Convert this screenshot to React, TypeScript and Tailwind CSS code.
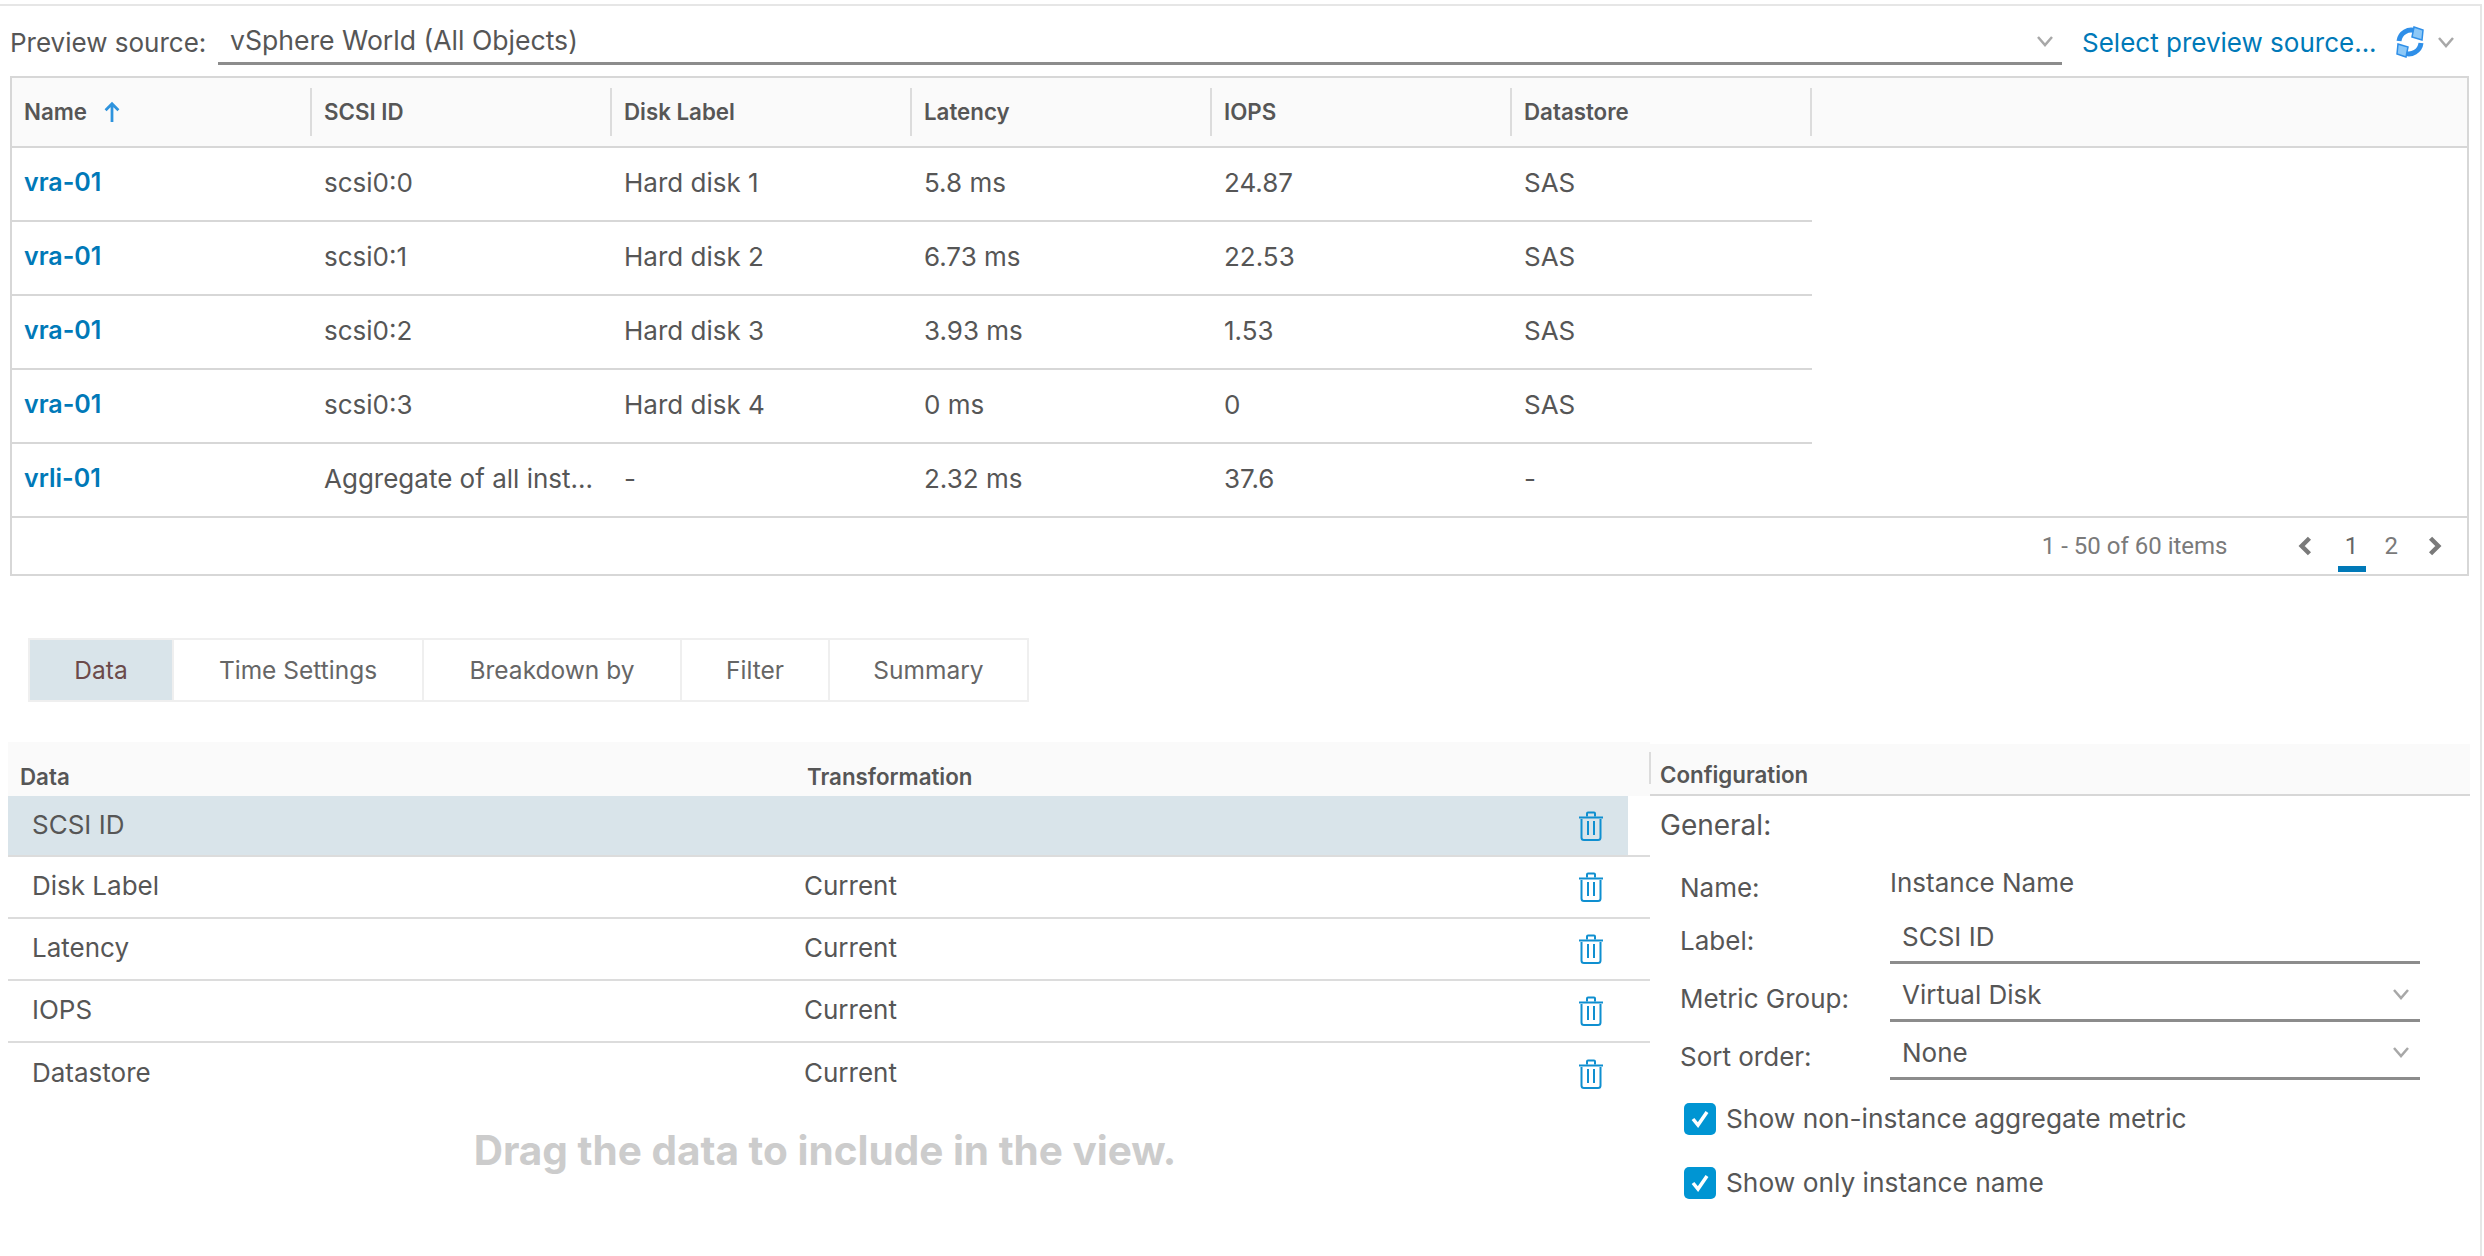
const FONT = "font-['Inter',sans-serif]";

const rows = [
  ["vra-01", "scsi0:0", "Hard disk 1", "5.8 ms", "24.87", "SAS"],
  ["vra-01", "scsi0:1", "Hard disk 2", "6.73 ms", "22.53", "SAS"],
  ["vra-01", "scsi0:2", "Hard disk 3", "3.93 ms", "1.53", "SAS"],
  ["vra-01", "scsi0:3", "Hard disk 4", "0 ms", "0", "SAS"],
  ["vrli-01", "Aggregate of all inst...", "-", "2.32 ms", "37.6", "-"],
];
const heads = ["SCSI ID", "Disk Label", "Latency", "IOPS", "Datastore"];
const dataRows = [
  ["SCSI ID", ""],
  ["Disk Label", "Current"],
  ["Latency", "Current"],
  ["IOPS", "Current"],
  ["Datastore", "Current"],
];

function Chevron({ className = "" }: { className?: string }) {
  return (
    <svg viewBox="0 0 18 12" className={"w-[18px] h-[12px] " + className} fill="none" stroke="#a8a8a8" strokeWidth="2.500">
      <path d="M2 2l7 8 7-8" />
    </svg>
  );
}

function Trash() {
  return (
    <svg viewBox="0 0 26 30" className="w-[26px] h-[30px]" fill="none" stroke="#0f8fd0" strokeWidth="2">
      <path d="M1 6.5h24" />
      <path d="M9 5.500V2.500q0-1 1-1h6q1 0 1 1v3" />
      <path d="M3.500 8v18.500q0 2.500 2.500 2.500h14q2.500 0 2.500-2.500V8" />
      <path d="M10 10v14M16 10v14" />
    </svg>
  );
}

function Refresh() {
  return (
    <svg viewBox="0 0 30 32" className="w-[30px] h-[32px]">
      <path d="M4 15C5 7 13 2 21 5" fill="none" stroke="#2f8fe8" strokeWidth="5" />
      <path d="M26 17C25 25 17 30 9 27" fill="none" stroke="#2f8fe8" strokeWidth="5" />
      <path d="M19 1l9 3-1 10-10-3z" fill="#8cc8f7" stroke="#2f8fe8" strokeWidth="1.500" />
      <path d="M11 31l-9-3 1-10 10 3z" fill="#8cc8f7" stroke="#2f8fe8" strokeWidth="1.500" />
    </svg>
  );
}

function Checkbox({ label }: { label: string }) {
  return (
    <div className="flex items-center h-[32px]">
      <div className="w-[32px] h-[32px] rounded-[5px] bg-[#0095d3] flex items-center justify-center">
        <svg viewBox="0 0 20 18" className="w-[20px] h-[18px]" fill="none" stroke="#fff" strokeWidth="3.500">
          <path d="M3 9l5 6 9-13" />
        </svg>
      </div>
      <span className="ml-[10px] text-[26.3px] text-[#565656]">{label}</span>
    </div>
  );
}

function FormRow({ label, value, chevron }: { label: string; value: string; chevron?: boolean }) {
  return (
    <div className="flex items-start ml-[30px] h-[58px]">
      <div className="w-[210px] text-[26px] text-[#565656] leading-[30px] pt-[6px]">{label}</div>
      <div className="w-[530px] h-[44px] border-b-[3px] border-[#8c8c8c] flex items-start justify-between pl-[12px] pr-[10px]">
        <span className="text-[26px] text-[#565656] leading-[30px] mt-[2px]">{value}</span>
        {chevron && <Chevron className="mt-[10px]" />}
      </div>
    </div>
  );
}

export default function App() {
  return (
    <div className={"w-[2484px] h-[1256px] bg-white overflow-hidden pt-[4px] " + FONT}>
      <div className="w-[2482px] h-[1252px] border-t-2 border-r-2 border-[#e6e6e6]">
        {/* toolbar */}
        <div className="h-[70px] flex items-start pl-[10px]">
          <span className="w-[208px] text-[26px] leading-[32px] pt-[21px] box-content text-[#565656] whitespace-nowrap">Preview source:</span>
          <div className="w-[1844px] h-[59px] border-b-[3px] border-[#8c8c8c] flex items-center justify-between pl-[12px] pr-[8px] pt-[14px]">
            <span className="text-[26.6px] text-[#565656]">vSphere World (All Objects)</span>
            <Chevron />
          </div>
          <span className="ml-[20px] mt-[21px] text-[26px] leading-[32px] text-[#0079b8] whitespace-nowrap">Select preview source...</span>
          <div className="ml-[18px] mt-[20px] shrink-0"><Refresh /></div>
          <Chevron className="ml-[12px] mt-[30px] shrink-0" />
        </div>

        {/* table */}
        <div className="ml-[10px] w-[2459px] border-2 border-[#d7d7d7]">
          <div className="h-[70px] bg-[#fafafa] border-b-2 border-[#d7d7d7] flex items-center">
            <div className="w-[300px] h-[48px] flex items-center pl-[12px] border-r-2 border-[#dcdcdc] text-[22.3px] font-semibold text-[#565656]">
              Name
              <svg viewBox="0 0 20 24" className="w-[20px] h-[22px] ml-[15px]" fill="none" stroke="#2e93dd" strokeWidth="3">
                <path d="M10 23V3M3 10l7-7 7 7" />
              </svg>
            </div>
            {heads.map((h) => (
              <div key={h} className="w-[300px] h-[48px] flex items-center pl-[12px] border-r-2 border-[#dcdcdc] text-[22.3px] font-semibold text-[#565656]">{h}</div>
            ))}
          </div>
          {rows.map((r, i) => (
            <div key={i} className="w-[1800px] h-[74px] border-b-2 border-[#d7d7d7] flex items-center pb-[3px] text-[26px] text-[#565656]">
              <div className="w-[300px] pl-[12px] text-[25px] font-semibold text-[#0079b8]">{r[0]}</div>
              {r.slice(1).map((c, j) => (
                <div key={j} className="w-[300px] pl-[12px] pr-[10px] truncate">{c}</div>
              ))}
            </div>
          ))}
          <div className="h-[56px] border-t-2 -mt-[2px] border-[#d7d7d7] box-content flex items-center justify-end font-['Roboto',sans-serif] text-[24px] text-[#7a7a7a]">
            <span>1 - 50 of 60 items</span>
            <svg viewBox="0 0 12 18" className="w-[14px] h-[20px] ml-[70px]" fill="none" stroke="#7a7a7a" strokeWidth="4"><path d="M10 2L3 9l7 7" /></svg>
            <div className="ml-[26px] w-[28px] h-[44px] mt-[8px] flex justify-center border-b-[6px] border-[#0079b8] text-[#666]">1</div>
            <span className="ml-[19px]">2</span>
            <svg viewBox="0 0 12 18" className="w-[14px] h-[20px] ml-[30px] mr-[25px]" fill="none" stroke="#7a7a7a" strokeWidth="4"><path d="M2 2l7 7-7 7" /></svg>
          </div>
        </div>

        {/* tabs */}
        <div className="mt-[62px] ml-[28px] flex h-[64px] text-[24.5px] text-[#666]">
          <div className="w-[146px] bg-[#d9e4ea] border-2 border-[#efefef] flex items-center justify-center text-[#6b4a4a]">Data</div>
          <div className="w-[250px] border-2 border-l-0 border-[#efefef] flex items-center justify-center">Time Settings</div>
          <div className="w-[258px] border-2 border-l-0 border-[#efefef] flex items-center justify-center">Breakdown by</div>
          <div className="w-[148px] border-2 border-l-0 border-[#efefef] flex items-center justify-center">Filter</div>
          <div className="w-[199px] border-2 border-l-0 border-[#efefef] flex items-center justify-center">Summary</div>
        </div>

        {/* bottom */}
        <div className="mt-[40px] flex items-start">
          <div className="w-[1642px] ml-[8px]">
            <div className="h-[54px] bg-[#fafafa] flex items-end pb-[3px] text-[22.3px] font-semibold text-[#565656]">
              <span className="w-[799px] pl-[12px]">Data</span>
              <span>Transformation</span>
            </div>
            {dataRows.map((r, i) => (
              <div key={r[0]} className={"flex text-[26px] text-[#565656] " + (i === 0 ? "h-[61px] " : "h-[62px] ") + (i < 4 ? "border-b-2 border-[#dcdcdc]" : "")}>
                <div className={"w-[1620px] flex items-center pb-[3px] " + (i === 0 ? "bg-[#d9e4ea]" : "")}>
                  <span className="w-[796px] pl-[24px]">{r[0]}</span>
                  <span className="flex-1">{r[1]}</span>
                  <span className="mr-[24px] pt-[3px]"><Trash /></span>
                </div>
              </div>
            ))}
            <div className="mt-[23px] text-center pr-[8px] text-[40.5px] font-bold text-[#cccccc] leading-[46px]">Drag the data to include in the view.</div>
          </div>
          <div className="w-[820px] mt-[2px]">
            <div className="h-[52px] bg-[#fafafa] border-b-2 border-[#d7d7d7] flex items-center relative pl-[10px] pt-[12px] text-[22.3px] font-semibold text-[#565656]">
              <span className="absolute left-[-1px] top-[8px] w-[2px] h-[32px] bg-[#dcdcdc]" />
              Configuration
            </div>
            <div className="pl-[10px] text-[28px] text-[#565656] leading-[32px] pt-[13px]">General:</div>
            <div className="ml-[30px] mt-[21px] h-[58px] flex items-start text-[26px] leading-[30px] text-[#565656] pl-0">
              <div className="w-[210px] pt-[11px]">Name:</div>
              <div className="pt-[6px]">Instance Name</div>
            </div>
            <FormRow label="Label:" value="SCSI ID" />
            <FormRow label="Metric Group:" value="Virtual Disk" chevron />
            <FormRow label="Sort order:" value="None" chevron />
            <div className="ml-[34px] mt-[9px] flex flex-col gap-[32px]">
              <Checkbox label="Show non-instance aggregate metric" />
              <Checkbox label="Show only instance name" />
            </div>
          </div>
        </div>
      </div>
    </div>
  );
}
